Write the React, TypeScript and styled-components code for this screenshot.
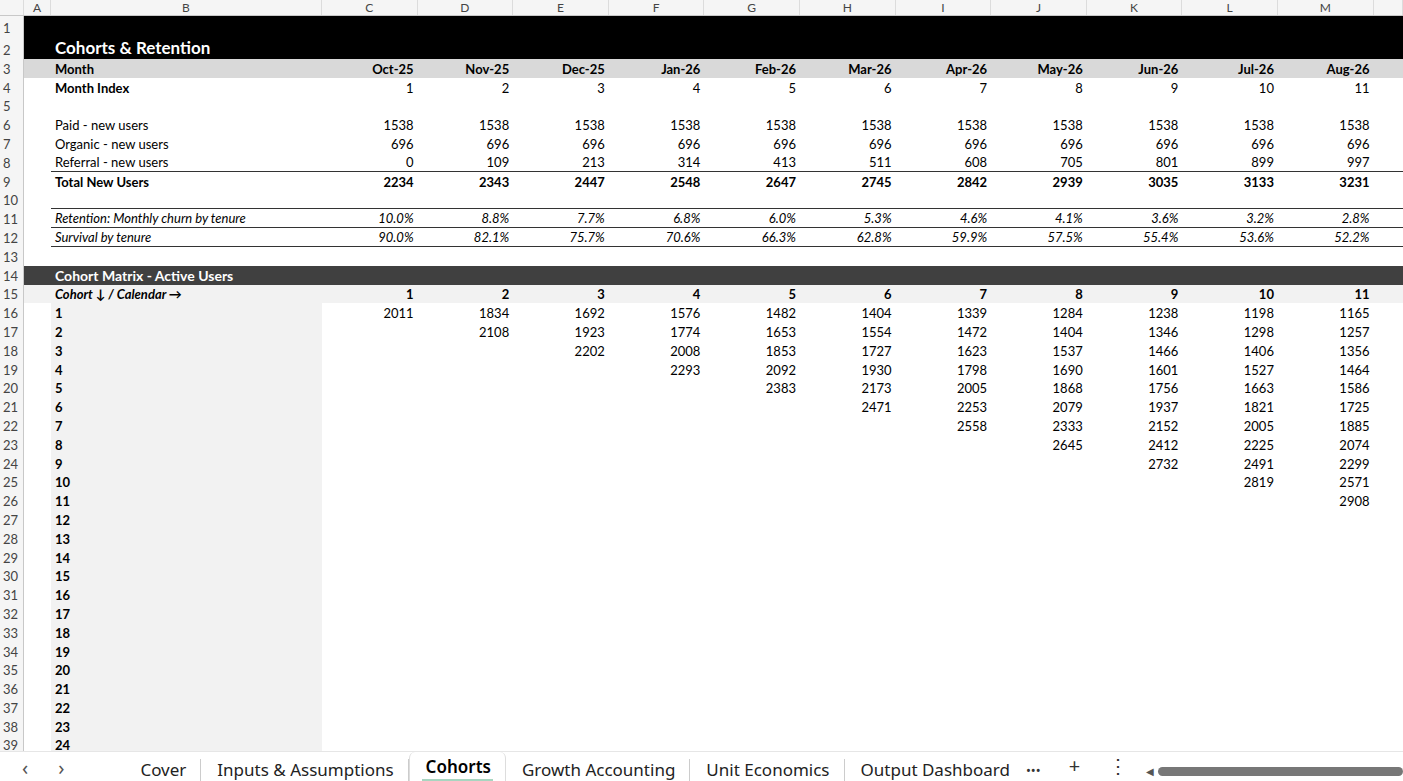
import React from "react";
import styled, { createGlobalStyle } from "styled-components";

const Global = createGlobalStyle`
  html,body{margin:0;padding:0;background:#fff;overflow:hidden;}
  body{font-family:Lato,"Liberation Sans",sans-serif;font-size:13px;color:#000;}
`;

const COLS = "24px 27px 271px repeat(11, 95.6px) 1fr";
const Page = styled.div`width:1403px;height:781px;display:flex;flex-direction:column;overflow:hidden;`;
const Sheet = styled.div`flex:1;overflow:hidden;`;
const HeadRow = styled.div`display:grid;grid-template-columns:${COLS};height:16px;background:#f5f5f5;border-bottom:1px solid #c8c8c8;box-sizing:border-box;`;
const ColHead = styled.div`font-size:12px;color:#444;text-align:center;line-height:15px;border-right:1px solid #dcdcdc;`;
const Row = styled.div<{ $h?: number }>`display:grid;grid-template-columns:${COLS};height:${p => p.$h ?? 18.8}px;`;
const RowNum = styled.div`font-size:13px;color:#444;padding-left:3px;background:#f5f5f5;border-right:1px solid #c8c8c8;display:flex;align-items:flex-end;padding-bottom:1px;box-sizing:border-box;`;
const Cell = styled.div<{ $bg?: string; $right?: boolean; $bold?: boolean; $italic?: boolean; $top?: boolean; $bottom?: boolean; $size?: number; $color?: string }>`
  background:${p => p.$bg ?? "transparent"};
  text-align:${p => (p.$right ? "right" : "left")};
  font-weight:${p => (p.$bold ? 700 : 400)};
  font-style:${p => (p.$italic ? "italic" : "normal")};
  font-size:${p => p.$size ?? 13}px;
  color:${p => p.$color ?? "#000"};
  border-top:${p => (p.$top ? "1px solid #333" : "none")};
  border-bottom:${p => (p.$bottom ? "1px solid #333" : "none")};
  padding:0 4px;box-sizing:border-box;white-space:nowrap;overflow:visible;
  display:flex;align-items:flex-end;justify-content:${p => (p.$right ? "flex-end" : "flex-start")};padding-bottom:1px;
`;
const TabBar = styled.div`height:29px;flex:none;display:flex;align-items:flex-end;background:#fff;border-top:1px solid #e6e6e6;font-family:"Noto Sans",sans-serif;font-size:17px;color:#222;`;
const Nav = styled.div`display:flex;gap:30px;padding:0 0 3px 22px;color:#555;font-size:20px;line-height:20px;`;
const Tab = styled.div<{ $active?: boolean }>`
  padding:0 14px 0 16px;height:${p => (p.$active ? 29 : 22)}px;display:flex;align-items:flex-end;
  border-left:${p => (p.$active ? "1px solid #ddd" : "none")};border-right:1px solid ${p => (p.$active ? "#ddd" : "#ccc")};
  ${p => p.$active ? "border-radius:6px 6px 0 0;font-weight:600;color:#000;padding-bottom:3px;" : ""}
  position:relative;line-height:22px;box-sizing:border-box;
`;
const Underline = styled.span`position:absolute;left:12px;right:12px;bottom:0;height:2px;background:#a8d5c0;`;
const Icons = styled.div`display:flex;gap:28px;align-items:flex-end;padding:0 0 2px 12px;font-size:20px;color:#333;`;
const Scroll = styled.div`flex:1;margin:0 0 4px 18px;height:12px;display:flex;align-items:center;gap:4px;`;
const Thumb = styled.div`flex:1;height:9px;border-radius:5px;background:#777;`;

const cols = ["A","B","C","D","E","F","G","H","I","J","K","L","M",""];
const months = ["Oct-25","Nov-25","Dec-25","Jan-26","Feb-26","Mar-26","Apr-26","May-26","Jun-26","Jul-26","Aug-26"];
const paid = Array(11).fill("1538");
const org = Array(11).fill("696");
const ref = ["0","109","213","314","413","511","608","705","801","899","997"];
const tot = ["2234","2343","2447","2548","2647","2745","2842","2939","3035","3133","3231"];
const churn = ["10.0%","8.8%","7.7%","6.8%","6.0%","5.3%","4.6%","4.1%","3.6%","3.2%","2.8%"];
const surv = ["90.0%","82.1%","75.7%","70.6%","66.3%","62.8%","59.9%","57.5%","55.4%","53.6%","52.2%"];
const matrix: number[][] = [
  [2011,1834,1692,1576,1482,1404,1339,1284,1238,1198,1165],
  [2108,1923,1774,1653,1554,1472,1404,1346,1298,1257],
  [2202,2008,1853,1727,1623,1537,1466,1406,1356],
  [2293,2092,1930,1798,1690,1601,1527,1464],
  [2383,2173,2005,1868,1756,1663,1586],
  [2471,2253,2079,1937,1821,1725],
  [2558,2333,2152,2005,1885],
  [2645,2412,2225,2074],
  [2732,2491,2299],
  [2819,2571],
  [2908],
];

type Opt = { bg?: string; bold?: boolean; italic?: boolean; bottom?: boolean; color?: string; size?: number; bBg?: string; h?: number; labelBold?: boolean; labelItalic?: boolean; valsBold?: boolean };

function DataRow({ n, label, vals, o = {} }: { n: number; label?: string; vals?: (string | null)[]; o?: Opt }) {
  const v = vals ?? Array(11).fill(null);
  const common = { $bg: o.bg, $italic: o.italic, $bottom: o.bottom, $color: o.color, $size: o.size };
  return (
    <Row $h={o.h}>
      <RowNum>{n}</RowNum>
      <Cell $bg={o.bg} />
      <Cell {...common} $bg={o.bBg ?? o.bg} $bold={o.labelBold ?? o.bold} $italic={o.labelItalic ?? o.italic}>{label}</Cell>
      {v.map((x, i) => <Cell key={i} {...common} $right $bold={o.valsBold ?? o.bold}>{x}</Cell>)}
      <Cell {...common} />
    </Row>
  );
}

export default function App() {
  return (
    <Page>
      <Global />
      <Sheet>
        <HeadRow>
          <ColHead />
          {cols.map((c, i) => <ColHead key={i}>{c}</ColHead>)}
        </HeadRow>
        <DataRow n={1} o={{ bg: "#000", h: 21 }} />
        <DataRow n={2} label="Cohorts & Retention" o={{ bg: "#000", bold: true, color: "#fff", size: 17, h: 22 }} />
        <DataRow n={3} label="Month" vals={months} o={{ bg: "#d9d9d9", bold: true }} />
        <DataRow n={4} label="Month Index" vals={months.map((_, i) => String(i + 1))} o={{ labelBold: true }} />
        <DataRow n={5} />
        <DataRow n={6} label="Paid - new users" vals={paid} />
        <DataRow n={7} label="Organic - new users" vals={org} />
        <DataRow n={8} label="Referral - new users" vals={ref} o={{ bottom: true }} />
        <DataRow n={9} label="Total New Users" vals={tot} o={{ bold: true }} />
        <DataRow n={10} o={{ bottom: true }} />
        <DataRow n={11} label="Retention: Monthly churn by tenure" vals={churn} o={{ italic: true, bottom: true }} />
        <DataRow n={12} label="Survival by tenure" vals={surv} o={{ italic: true, bottom: true }} />
        <DataRow n={13} />
        <DataRow n={14} label="Cohort Matrix - Active Users" o={{ bg: "#404040", bold: true, color: "#fff", size: 14 }} />
        <DataRow n={15} label="Cohort ↓ / Calendar →" vals={months.map((_, i) => String(i + 1))} o={{ bg: "#f2f2f2", bold: true, labelItalic: true }} />
        {Array.from({ length: 24 }, (_, k) => {
          const r = matrix[k];
          const vals = Array.from({ length: 11 }, (_, c) => (r && c >= k ? String(r[c - k]) : null));
          return <DataRow key={k} n={16 + k} label={String(k + 1)} vals={vals} o={{ bBg: "#f2f2f2", labelBold: true }} />;
        })}
      </Sheet>
      <TabBar>
        <Nav><span>‹</span><span>›</span></Nav>
        <Tab style={{ marginLeft: 60 }}>Cover</Tab>
        <Tab>Inputs &amp; Assumptions</Tab>
        <Tab $active>Cohorts<Underline /></Tab>
        <Tab>Growth Accounting</Tab>
        <Tab>Unit Economics</Tab>
        <Tab style={{ borderRight: "none", paddingRight: 4 }}>Output Dashboard</Tab>
        <Icons><span style={{ fontSize: 13 }}>•••</span><span>+</span><span>⋮</span></Icons>
        <Scroll><span style={{ fontSize: 10, color: "#555" }}>◀</span><Thumb /></Scroll>
      </TabBar>
    </Page>
  );
}
